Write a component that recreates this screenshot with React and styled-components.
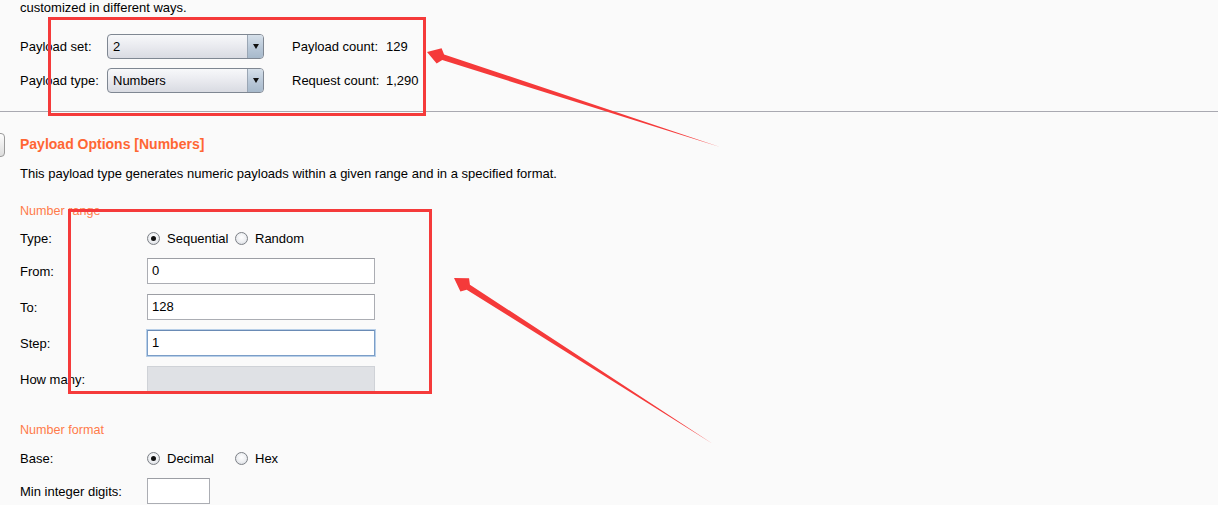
import React from 'react'
import styled, { createGlobalStyle } from 'styled-components'

const GlobalStyle = createGlobalStyle`
  html, body {
    margin: 0;
    padding: 0;
    background: #fafafa;
  }
  body {
    font-family: "Liberation Sans", Arial, sans-serif;
    font-size: 13px;
    color: #000;
  }
`

const Page = styled.div`
  position: relative;
  width: 1218px;
  height: 505px;
  overflow: hidden;
  background: #fafafa;
`

const Section = styled.div`
  padding-left: 20px;
`

const Intro = styled.div`
  line-height: 16px;
`

const TopRow = styled.div`
  display: flex;
  align-items: center;
  height: 25px;
  margin-top: ${p => p.$mt || 0}px;
`

const TopLabel = styled.div`
  width: 87px;
`

const Combo = styled.div`
  display: flex;
  width: 157px;
  height: 25px;
  box-sizing: border-box;
  border: 1px solid #7f8792;
  border-radius: 4px;
  overflow: hidden;
  background: linear-gradient(#f7f8fa, #e9eaef 50%, #d9dbe2);
`

const ComboText = styled.div`
  flex: 1;
  padding-left: 5px;
  line-height: 23px;
`

const ComboButton = styled.div`
  width: 15px;
  border-left: 1px solid #9aa6b4;
  background: linear-gradient(#d6e0ea, #b9c8d8 55%, #a7b9cb);
  display: flex;
  align-items: center;
  justify-content: center;
  &::after {
    content: '';
    border-left: 3.5px solid transparent;
    border-right: 3.5px solid transparent;
    border-top: 5px solid #111;
  }
`

const CountLabel = styled.div`
  width: 94px;
  margin-left: 28px;
`

const Separator = styled.div`
  height: 1px;
  background: #a9a9b1;
  margin-top: 18px;
`

const TitleRow = styled.div`
  display: flex;
  align-items: center;
  height: 24px;
  margin-top: 21px;
`

/* collapse button, mostly hidden past the left edge */
const Toggle = styled.div`
  width: 20px;
  height: 24px;
  box-sizing: border-box;
  margin-left: -35px;
  margin-right: 15px;
  border: 1px solid #9a9a9a;
  border-radius: 4px;
  background: linear-gradient(#fdfdfd, #dcdcdc);
`

const Title = styled.div`
  font-size: 14px;
  font-weight: bold;
  color: #ff6633;
  padding-bottom: 3px;
`

const Desc = styled.div`
  line-height: 16px;
  margin-top: 9px;
`

const SubHead = styled.div`
  font-size: 12.6px;
  line-height: 16px;
  color: #ff7a4a;
  margin-top: ${p => p.$mt}px;
`

const FieldRow = styled.div`
  display: flex;
  align-items: center;
  height: ${p => p.$h || 26}px;
  margin-top: ${p => p.$mt || 10}px;
`

const FieldLabel = styled.div`
  width: 127px;
`

const Input = styled.div`
  width: ${p => p.$w || 228}px;
  height: 26px;
  box-sizing: border-box;
  padding-left: 4px;
  line-height: 24px;
  background: ${p => (p.$disabled ? '#dfe1e5' : '#fff')};
  border: 1px solid ${p => (p.$disabled ? '#cfd2d7' : p.$focus ? '#7b9ec8' : '#abadb3')};
  border-top-color: ${p => (p.$disabled ? '#cfd2d7' : p.$focus ? '#6a8bb5' : '#9c9ea4')};
  box-shadow: ${p => (p.$focus ? '0 0 0 1px #b8cfe8' : 'none')};
`

const RadioGroup = styled.div`
  display: grid;
  grid-template-columns: 88px auto;
  align-items: center;
`

const RadioOption = styled.div`
  display: flex;
  align-items: center;
`

const RadioDot = styled.span`
  width: 13px;
  height: 13px;
  box-sizing: border-box;
  border-radius: 50%;
  border: 1px solid #7d8187;
  background: radial-gradient(circle at 50% 40%, #ffffff 0%, #eceef1 55%, #cdd0d5 100%);
  display: flex;
  align-items: center;
  justify-content: center;
  margin-right: 7px;
  &::after {
    content: '';
    width: 5px;
    height: 5px;
    border-radius: 50%;
    background: ${p => (p.$checked ? '#111' : 'transparent')};
  }
`

const Overlay = styled.svg`
  position: absolute;
  left: 0;
  top: 0;
  pointer-events: none;
`

const RED = '#f53a3a'

// tapered arrow polygon from tail towards tip
const arrowPoints = (tip, tail, headLen, headHalf, shaftHalf) => {
  const dx = tail[0] - tip[0]
  const dy = tail[1] - tip[1]
  const len = Math.hypot(dx, dy)
  const ux = dx / len
  const uy = dy / len
  const nx = -uy
  const ny = ux
  const bx = tip[0] + ux * headLen
  const by = tip[1] + uy * headLen
  const nb = headLen * 0.75
  const cx = tip[0] + ux * nb
  const cy = tip[1] + uy * nb
  const pts = [
    [tip[0], tip[1]],
    [cx + nx * headHalf, cy + ny * headHalf],
    [bx + nx * shaftHalf, by + ny * shaftHalf],
    [tail[0], tail[1]],
    [bx - nx * shaftHalf, by - ny * shaftHalf],
    [cx - nx * headHalf, cy - ny * headHalf],
  ]
  return pts.map(p => p.join(',')).join(' ')
}

const Radio = ({ checked, children }) => (
  <RadioOption>
    <RadioDot $checked={checked} />
    {children}
  </RadioOption>
)

const Annotations = () => (
  <Overlay width="1218" height="505" viewBox="0 0 1218 505">
    <rect x="49.5" y="18.5" width="375" height="96" fill="none" stroke={RED} strokeWidth="3" />
    <rect x="69.5" y="210.5" width="361" height="182" fill="none" stroke={RED} strokeWidth="3" />
    <polygon points={arrowPoints([427, 52], [720, 147], 17, 8, 3)} fill={RED} />
    <polygon points={arrowPoints([454, 278], [713, 444], 17, 8, 3)} fill={RED} />
  </Overlay>
)

const App = () => {
  return (
    <Page>
      <GlobalStyle />
      <Section>
        <Intro>customized in different ways.</Intro>
        <TopRow $mt={18}>
          <TopLabel>Payload set:</TopLabel>
          <Combo>
            <ComboText>2</ComboText>
            <ComboButton />
          </Combo>
          <CountLabel>Payload count:</CountLabel>
          <div>129</div>
        </TopRow>
        <TopRow $mt={9}>
          <TopLabel>Payload type:</TopLabel>
          <Combo>
            <ComboText>Numbers</ComboText>
            <ComboButton />
          </Combo>
          <CountLabel>Request count:</CountLabel>
          <div>1,290</div>
        </TopRow>
      </Section>
      <Separator />
      <Section>
        <TitleRow>
          <Toggle />
          <Title>Payload Options [Numbers]</Title>
        </TitleRow>
        <Desc>This payload type generates numeric payloads within a given range and in a specified format.</Desc>

        <SubHead $mt={21}>Number range</SubHead>
        <FieldRow $h={20} $mt={9}>
          <FieldLabel>Type:</FieldLabel>
          <RadioGroup>
            <Radio checked>Sequential</Radio>
            <Radio>Random</Radio>
          </RadioGroup>
        </FieldRow>
        <FieldRow>
          <FieldLabel>From:</FieldLabel>
          <Input>0</Input>
        </FieldRow>
        <FieldRow>
          <FieldLabel>To:</FieldLabel>
          <Input>128</Input>
        </FieldRow>
        <FieldRow>
          <FieldLabel>Step:</FieldLabel>
          <Input $focus>1</Input>
        </FieldRow>
        <FieldRow>
          <FieldLabel>How many:</FieldLabel>
          <Input $disabled />
        </FieldRow>

        <SubHead $mt={30}>Number format</SubHead>
        <FieldRow $h={20} $mt={10}>
          <FieldLabel>Base:</FieldLabel>
          <RadioGroup>
            <Radio checked>Decimal</Radio>
            <Radio>Hex</Radio>
          </RadioGroup>
        </FieldRow>
        <FieldRow $mt={10}>
          <FieldLabel>Min integer digits:</FieldLabel>
          <Input $w={63} />
        </FieldRow>
      </Section>
      <Annotations />
    </Page>
  )
}

export default App
